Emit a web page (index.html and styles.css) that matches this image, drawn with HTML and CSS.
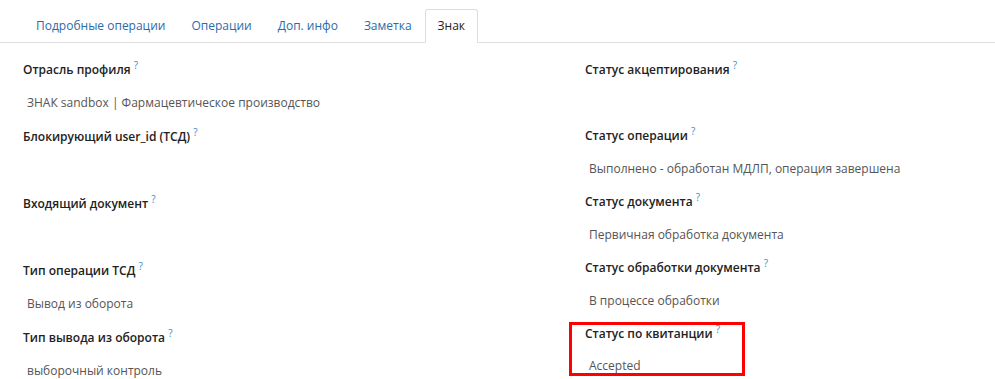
FILE: index.html
```html
<!DOCTYPE html>
<html lang="ru">
<head>
  <meta charset="UTF-8">
  <title>Знак</title>
  <link rel="stylesheet" href="styles.css">
</head>
<body>
  <!-- Tabs -->
  <ul class="tabs">
    <li class="tab"><a href="#">Подробные операции</a></li>
    <li class="tab"><a href="#">Операции</a></li>
    <li class="tab"><a href="#">Доп. инфо</a></li>
    <li class="tab"><a href="#">Заметка</a></li>
    <li class="tab active"><a href="#">Знак</a></li>
  </ul>

  <div class="panel">
    <div class="col col-left">
      <div class="field">
        <div class="label">Отрасль профиля <sup class="hint">?</sup></div>
        <div class="value">ЗНАК sandbox | Фармацевтическое производство</div>
      </div>
      <div class="field">
        <div class="label">Блокирующий user_id (ТСД) <sup class="hint">?</sup></div>
        <div class="value"></div>
      </div>
      <div class="field">
        <div class="label">Входящий документ <sup class="hint">?</sup></div>
        <div class="value"></div>
      </div>
      <div class="field">
        <div class="label">Тип операции ТСД <sup class="hint">?</sup></div>
        <div class="value">Вывод из оборота</div>
      </div>
      <div class="field">
        <div class="label">Тип вывода из оборота <sup class="hint">?</sup></div>
        <div class="value">выборочный контроль</div>
      </div>
    </div>

    <div class="col col-right">
      <div class="field">
        <div class="label">Статус акцептирования <sup class="hint">?</sup></div>
        <div class="value"></div>
      </div>
      <div class="field">
        <div class="label">Статус операции <sup class="hint">?</sup></div>
        <div class="value">Выполнено - обработан МДЛП, операция завершена</div>
      </div>
      <div class="field">
        <div class="label">Статус документа <sup class="hint">?</sup></div>
        <div class="value">Первичная обработка документа</div>
      </div>
      <div class="field">
        <div class="label">Статус обработки документа <sup class="hint">?</sup></div>
        <div class="value">В процессе обработки</div>
      </div>
      <div class="field highlight">
        <div class="label">Статус по квитанции <sup class="hint">?</sup></div>
        <div class="value">Accepted</div>
      </div>
    </div>
  </div>
</body>
</html>
```

FILE: styles.css
```css
body {
  margin: 0;
  font-family: "Open Sans", "DejaVu Sans", sans-serif;
  font-size: 12px;
  color: #333;
  background: #fff;
}

/* Tabs */
.tabs {
  display: flex;
  list-style: none;
  margin: 0;
  padding: 9px 0 0 23px;
  border-bottom: 1px solid #ddd;
}

.tab {
  margin-bottom: -1px;
}

.tab a {
  display: block;
  padding: 7px 12px 8px;
  line-height: 17px;
  color: #2c6ba8;
  text-decoration: none;
  border: 1px solid transparent;
  border-radius: 3px 3px 0 0;
}

.tab.active a {
  color: #222;
  background: #fff;
  border-color: #ddd #ddd transparent;
}

/* Content */
.panel {
  display: grid;
  grid-template-columns: 570px 1fr;
  padding-top: 18px;
}

.col-left {
  padding-left: 23px;
}

.col-left .field {
  height: 67px;
}

.col-right {
  padding-left: 15px;
}

.field {
  height: 66px;
}

.label {
  font-weight: 600;
  line-height: 18px;
  margin-bottom: 15px;
  color: #222;
}

.hint {
  font-size: 10px;
  font-weight: 400;
  color: #3a8cc9;
  vertical-align: top;
  position: relative;
  top: -5px;
}

.value {
  line-height: 18px;
  min-height: 18px;
  padding-left: 4px;
  color: #555;
}

.highlight {
  box-sizing: border-box;
  width: 176px;
  height: 54px;
  border: 3px solid #f00;
  margin: -3px 0 0 -16px;
  padding: 0 0 0 13px;
}

.highlight .label {
  margin-bottom: 14px;
}
```
